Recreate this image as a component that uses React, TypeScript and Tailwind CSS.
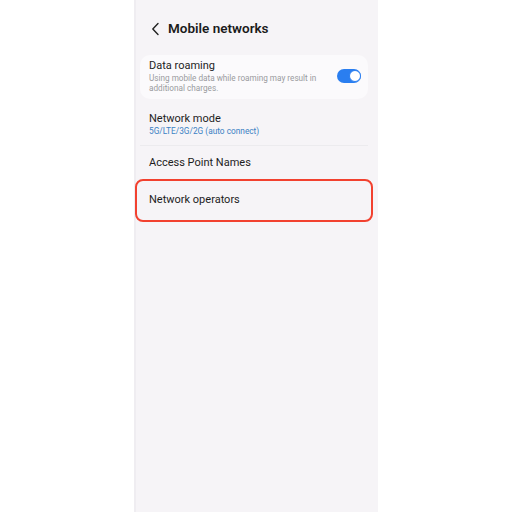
import React from 'react'

const rows = [
  { title: 'Network mode', sub: '5G/LTE/3G/2G (auto connect)' },
  { title: 'Access Point Names' },
]

const Toggle = () => (
  <div className="flex h-[14px] w-[24px] items-center justify-end rounded-full bg-[#2a7ef0]">
    <div className="h-[12px] w-[12px] rounded-full border-[1.5px] border-[#2a7ef0] bg-white" />
  </div>
)

export default function App() {
  return (
    <div
      className="flex h-[512px] w-[512px] justify-center bg-white"
      style={{ fontFamily: 'Roboto, "Noto Sans", sans-serif' }}
    >
      <div className="flex w-[244px] flex-col border-l-2 border-[#efedf1] bg-[#f6f4f7] pl-[4px] pr-[10px]">
        <div className="flex h-[55px] items-center gap-[8px] pl-[11px] pt-[2px]">
          <svg width="9" height="14" viewBox="0 0 9 14" fill="none">
            <path d="M7 1.5 1.8 7 7 12.5" stroke="#222" strokeWidth="1.4" strokeLinecap="round" strokeLinejoin="round" />
          </svg>
          <span className="text-[13.5px] font-semibold text-[#1b1b1b]">Mobile networks</span>
        </div>

        <div className="flex items-center rounded-[10px] bg-[#fbfafc] pb-[6px] pt-[4px] pl-[9px] pr-[7px]">
          <div className="flex-1">
            <div className="text-[11px] leading-[14px] text-[#1d1d1d]">Data roaming</div>
            <div className="text-[8.2px] leading-[10px] text-[#9a9a9e]">
              Using mobile data while roaming may result in
              <br />
              additional charges.
            </div>
          </div>
          <Toggle />
        </div>

        <div className="mt-[4px] flex flex-col">
          {rows.map((r, i) => (
            <div key={i} className={`flex flex-col justify-center pl-[9px] ${r.sub ? 'h-[43px]' : 'h-[34px]'} ${i === 0 ? 'border-b border-[#ecebee]' : ''}`}>
              <div className="text-[11px] leading-[14px] text-[#1d1d1d]">{r.title}</div>
              {r.sub && <div className="text-[8.3px] leading-[11px] text-[#3b82c4]">{r.sub}</div>}
            </div>
          ))}
          <div className="-mx-[5px] -mt-[1px] flex h-[43px] items-center rounded-[8px] border-2 border-[#f2412f] pl-[12px]">
            <span className="text-[11px] text-[#1d1d1d]">Network operators</span>
          </div>
        </div>
      </div>
    </div>
  )
}
